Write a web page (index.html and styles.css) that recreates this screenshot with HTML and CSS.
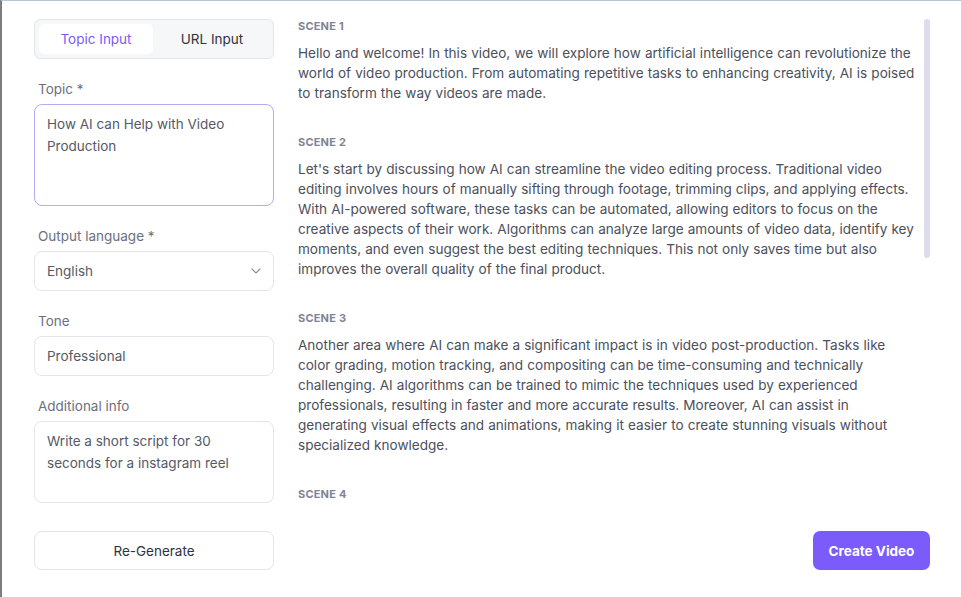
FILE: index.html
```html
<!DOCTYPE html>
<html lang="en">
<head>
    <meta charset="UTF-8">
    <meta name="viewport" content="width=device-width, initial-scale=1.0">
    <title>Video Script Generator</title>
    <link rel="stylesheet" href="styles.css">
</head>
<body>
    <div class="app">
        <!-- Left: script settings -->
        <form class="settings">
            <div class="tabs">
                <button type="button" class="tab active">Topic Input</button>
                <button type="button" class="tab">URL Input</button>
            </div>

            <label class="field-label" for="topic">Topic *</label>
            <textarea id="topic" class="field textarea focused">How AI can Help with Video Production</textarea>

            <label class="field-label" for="language">Output language *</label>
            <div class="select-wrap">
                <select id="language" class="field select">
                    <option>English</option>
                    <option>Spanish</option>
                    <option>French</option>
                </select>
                <svg class="chevron" width="10" height="6" viewBox="0 0 10 6"><path d="M1 1l4 4 4-4" fill="none" stroke="#8a8f9c" stroke-width="1.1" stroke-linecap="round" stroke-linejoin="round"/></svg>
            </div>

            <label class="field-label" for="tone">Tone</label>
            <input id="tone" class="field input" type="text" value="Professional">

            <label class="field-label" for="info">Additional info</label>
            <textarea id="info" class="field textarea short">Write a short script for 30 seconds for a instagram reel</textarea>
        </form>

        <!-- Right: generated scenes -->
        <div class="script-wrap">
            <div class="script">
                <div class="scene">
                    <h3 class="scene-title">Scene 1</h3>
                    <p>Hello and welcome! In this video, we will explore how artificial intelligence can revolutionize the world of video production. From automating repetitive tasks to enhancing creativity, AI is poised to transform the way videos are made.</p>
                </div>
                <div class="scene">
                    <h3 class="scene-title">Scene 2</h3>
                    <p>Let's start by discussing how AI can streamline the video editing process. Traditional video editing involves hours of manually sifting through footage, trimming clips, and applying effects. With AI-powered software, these tasks can be automated, allowing editors to focus on the creative aspects of their work. Algorithms can analyze large amounts of video data, identify key moments, and even suggest the best editing techniques. This not only saves time but also improves the overall quality of the final product.</p>
                </div>
                <div class="scene">
                    <h3 class="scene-title">Scene 3</h3>
                    <p>Another area where AI can make a significant impact is in video post-production. Tasks like color grading, motion tracking, and compositing can be time-consuming and technically challenging. AI algorithms can be trained to mimic the techniques used by experienced professionals, resulting in faster and more accurate results. Moreover, AI can assist in generating visual effects and animations, making it easier to create stunning visuals without specialized knowledge.</p>
                </div>
                <div class="scene">
                    <h3 class="scene-title">Scene 4</h3>
                    <p>AI is also changing the way we plan and shoot videos. Smart cameras can track subjects automatically, adjust exposure on the fly, and frame every shot perfectly. Script assistants can generate ideas, outlines, and storyboards in minutes, helping creators move from concept to production faster than ever before.</p>
                </div>
                <div class="scene">
                    <h3 class="scene-title">Scene 5</h3>
                    <p>Finally, AI makes video content more accessible. Automatic captions, translations, and voiceovers allow creators to reach audiences all around the world. Personalized recommendations help the right viewers discover the right videos at the right time.</p>
                </div>
                <div class="scene">
                    <h3 class="scene-title">Scene 6</h3>
                    <p>So, are you ready to embrace the future of video production? Start exploring AI tools today and see how they can help you create better videos in less time. Thanks for watching!</p>
                </div>
            </div>
            <div class="scroll-thumb"></div>
        </div>

        <button type="button" class="btn btn-outline">Re-Generate</button>
        <div class="actions">
            <button type="button" class="btn btn-primary">Create Video</button>
        </div>
    </div>
</body>
</html>
```

FILE: styles.css
```css
/* Base */
body {
    margin: 0;
    height: 597px;
    box-sizing: border-box;
    border-left: 2px solid #7d7d80;
    border-top: 1px solid #b7c3d6;
    padding: 18px 31px 0 32px;
    background: #fff;
    font-family: Inter, "Open Sans", sans-serif;
    font-size: 13.5px;
    color: #4b4f5c;
    overflow: hidden;
}

.app {
    display: grid;
    grid-template-columns: 240px 632px;
    grid-template-rows: 492px 39px;
    column-gap: 24px;
    row-gap: 20px;
}

/* Settings column */
.settings {
    display: flex;
    flex-direction: column;
    margin: 0;
}

.tabs {
    display: flex;
    gap: 2px;
    height: 40px;
    box-sizing: border-box;
    padding: 4px;
    background: #f6f7f9;
    border: 1px solid #e3e5ea;
    border-radius: 6px;
    margin-bottom: 20px;
}

.tab {
    flex: 1;
    border: none;
    background: transparent;
    border-radius: 5px;
    font-family: inherit;
    font-size: 13.5px;
    color: #30333c;
    cursor: pointer;
}

.tab.active {
    background: #fff;
    color: #7b5cf5;
}

.field-label {
    padding-left: 4px;
    line-height: 20px;
    color: #6b7080;
    margin-bottom: 5px;
}

.field {
    box-sizing: border-box;
    width: 100%;
    border: 1px solid #e4e5ea;
    border-radius: 8px;
    background: #fff;
    font-family: inherit;
    font-size: 13.5px;
    color: #555a66;
    margin: 0 0 20px;
    outline: none;
}

.textarea {
    height: 102px;
    padding: 8px 12px;
    line-height: 22px;
    resize: none;
}

.textarea.short {
    height: 82px;
    margin-bottom: 0;
}

.textarea.focused {
    border-color: #b9a8f3;
}

.select-wrap {
    position: relative;
}

.select {
    height: 40px;
    padding: 0 12px;
    appearance: none;
    -webkit-appearance: none;
}

.chevron {
    position: absolute;
    right: 13px;
    top: 17px;
    pointer-events: none;
}

.input {
    height: 40px;
    padding: 0 12px;
}

/* Scenes column */
.script-wrap {
    position: relative;
    min-height: 0;
}

.script {
    height: 100%;
    overflow-y: auto;
    padding-right: 12px;
    scrollbar-width: none;
}

.script::-webkit-scrollbar {
    display: none;
}

.scroll-thumb {
    position: absolute;
    top: 0;
    right: 0;
    width: 6px;
    height: 239px;
    border-radius: 3px;
    background: #dddcec;
}

.scene + .scene {
    margin-top: 32px;
}

.scene-title {
    margin: 0 0 10px;
    font-size: 11px;
    line-height: 14px;
    font-weight: 700;
    text-transform: uppercase;
    letter-spacing: 0.2px;
    color: #7f8496;
}

.scene p {
    margin: 0;
    font-size: 13.55px;
    word-spacing: 0.3px;
    line-height: 20px;
    color: #4b4f5c;
}

/* Buttons */
.btn {
    height: 39px;
    border-radius: 8px;
    font-family: inherit;
    font-size: 13.5px;
    cursor: pointer;
}

.btn-outline {
    background: #fff;
    border: 1px solid #e3e4e9;
    color: #30333c;
}

.actions {
    display: flex;
    justify-content: flex-end;
}

.btn-primary {
    width: 117px;
    border: none;
    border-radius: 7px;
    background: #7b5cfa;
    color: #fff;
    font-weight: 700;
}
```
